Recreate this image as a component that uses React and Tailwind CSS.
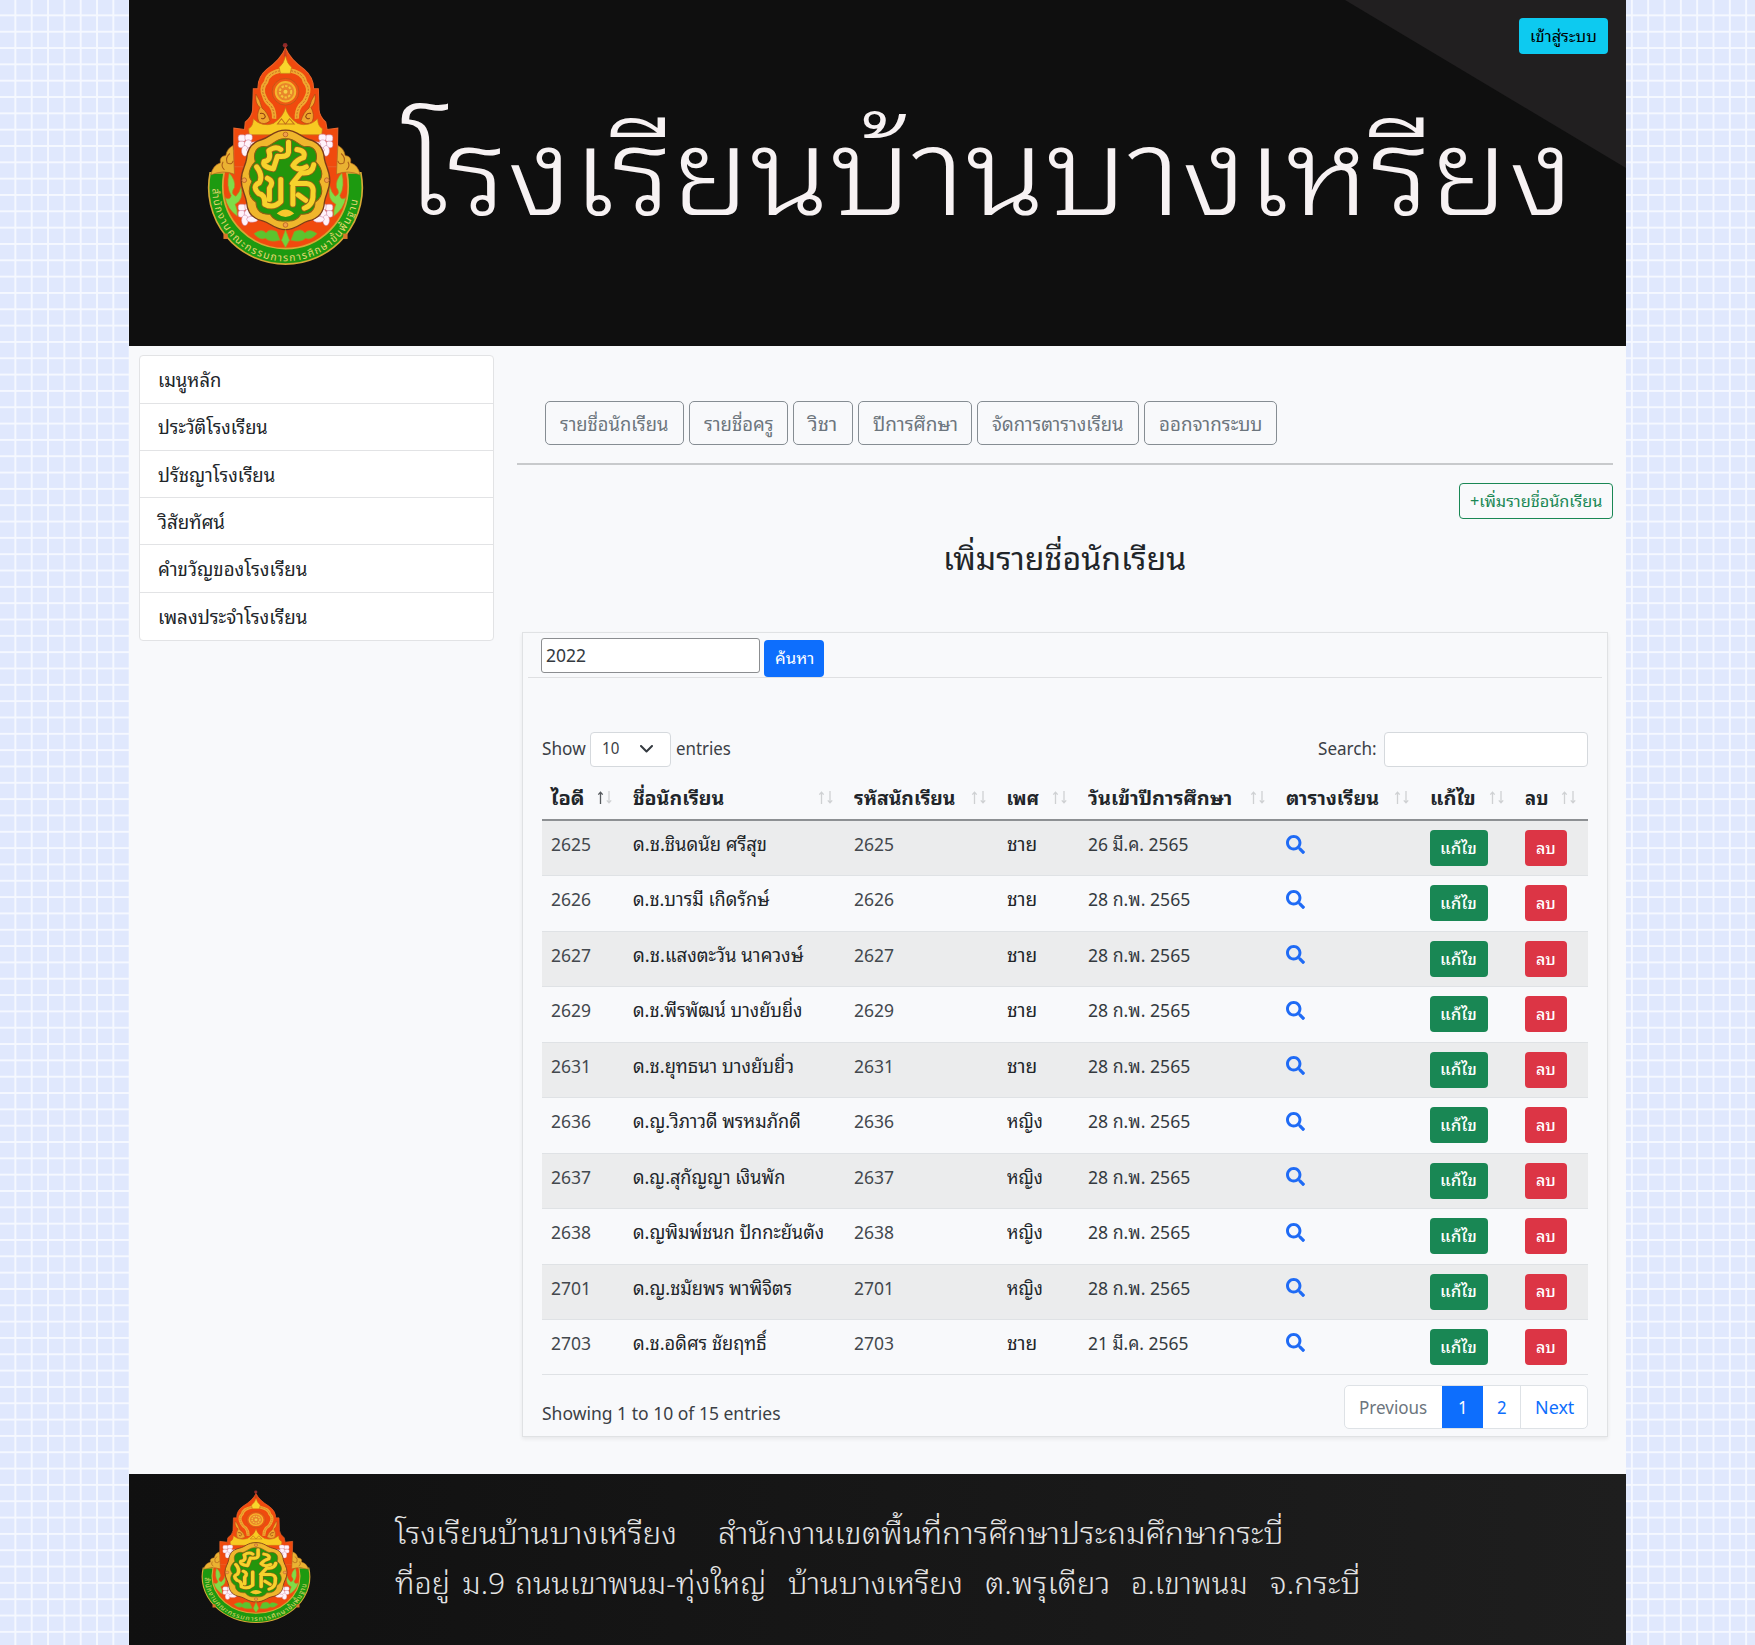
import { useLayoutEffect, useRef, useState } from "react";
import { FaSearch } from "react-icons/fa";

/* Text run condensed or widened to a given width. */
function Fit({ w, children, className = "" }) {
  const ref = useRef(null);
  const [k, setK] = useState(1);
  useLayoutEffect(() => {
    setK(w / ref.current.offsetWidth);
  }, [w, children]);
  return (
    <span className={"inline-block whitespace-pre text-left " + className} style={{ width: w }}>
      <span ref={ref} className="inline-block origin-left whitespace-pre" style={{ transform: `scaleX(${k})` }}>
        {children}
      </span>
    </span>
  );
}

function Lotus({ x, y, flip }) {
  return (
    <g transform={`translate(${x} ${y}) scale(${flip ? -1 : 1} 1)`} stroke="#c87a9c" strokeWidth="1.5" fill="#fff3fa">
      <rect x="-32" y="-34" width="22" height="20" rx="7" />
      <rect x="-12" y="-36" width="22" height="20" rx="7" />
      <rect x="-32" y="-15" width="20" height="20" rx="7" />
      <ellipse cx="-2" cy="-4" rx="12" ry="15" />
      <ellipse cx="18" cy="-4" rx="14" ry="9" />
      <ellipse cx="-12" cy="14" rx="10" ry="16" />
      <ellipse cx="10" cy="11" rx="17" ry="9" />
    </g>
  );
}

function Leaf({ flip }) {
  return (
    <g transform={flip ? "translate(632 0) scale(-1 1)" : undefined}>
      <path d="M148 458 Q168 480 164 502 Q150 520 168 528 Q180 515 184 498 Q192 540 166 552 Q174 568 172 588 Q142 566 136 532 Q150 542 154 526 Q138 500 148 458Z" fill="#7fdc48" stroke="#b5871d" strokeWidth="2" />
      <path d="M222 640 Q246 622 258 638 Q268 622 290 634 L300 660 Q270 668 256 654 Q240 662 222 640Z" fill="#5cc42e" stroke="#b5871d" strokeWidth="2" />
      <path d="M160 376 Q142 384 138 406 Q118 408 122 428 Q98 436 94 464 Q130 448 164 462Z" fill="#eab232" stroke="#b0641c" strokeWidth="2" />
      <path d="M150 400 q-14 12 -8 28 q14 8 18 -6 M130 425 q-8 14 4 24" fill="none" stroke="#a85a18" strokeWidth="3" />
      <path d="M228 222 Q224 250 240 262 Q228 284 236 304 Q252 318 270 302 Q262 276 246 264 Q240 240 228 222Z" fill="#efa52c" stroke="#a94712" strokeWidth="2" />
      <path d="M240 280 q12 -4 16 10 q-6 10 -12 4" fill="none" stroke="#8d3d10" strokeWidth="3" />
      <path d="M300 152 Q262 160 258 186 Q240 206 254 232 Q258 246 272 256 Q284 274 282 296" fill="none" stroke="#f0a830" strokeWidth="13" />
      <path d="M300 152 Q262 160 258 186 Q240 206 254 232 Q258 246 272 256 Q284 274 282 296" fill="none" stroke="#b0561a" strokeWidth="2" strokeDasharray="6 4" />
      <rect x="131" y="640" width="13" height="16" fill="#d9762a" />
    </g>
  );
}

function Emblem({ className, id }) {
  return (
    <svg className={className} viewBox="82 66 468 668" preserveAspectRatio="none" aria-hidden="true">
      <path d="M91.3 458 A229 229 0 1 0 540.7 458Z" fill="#1d9a10" stroke="#d6a935" strokeWidth="5" />
      <circle cx="316" cy="498" r="187" fill="#f04a0e" stroke="#d6a935" strokeWidth="5" />
      <path d="M316 84 Q330 118 372 148 Q400 172 400 206 L414 206 L416 270 Q418 290 436 306 L440 328 L472 324 L470 440 L162 440 L162 324 L194 328 L196 306 Q216 290 218 270 L220 206 L234 206 Q232 172 260 148 Q302 118 316 84Z" fill="#f04a0e" stroke="#e8632a" strokeWidth="3" />
      <circle cx="315" cy="76" r="7" fill="#8f2a2a" />
      <path d="M315 74 L320 110 H311Z" fill="#c9401e" />
      <Leaf />
      <Leaf flip />
      <path d="M316 108 Q320 130 334 142 L330 160 H301 L297 142 Q312 130 316 108Z" fill="#f9d52c" stroke="#c77a16" strokeWidth="2" />
      <circle cx="316" cy="215" r="40" fill="#ee5a14" stroke="#b4561a" strokeWidth="2" />
      <circle cx="316" cy="215" r="29" fill="#e9862a" stroke="#f5b62e" strokeWidth="6" />
      <circle cx="316" cy="215" r="17" fill="none" stroke="#f5c53a" strokeWidth="6" strokeDasharray="7 4" />
      <circle cx="316" cy="215" r="6" fill="#f6cf45" />
      <path d="M316 262 Q322 290 352 310 Q386 322 412 296 Q412 318 426 326 L424 344 H208 L206 326 Q220 318 220 296 Q246 322 280 310 Q310 290 316 262Z" fill="#f8ca22" stroke="#c4741a" strokeWidth="2" />
      <path d="M292 312 L304 296 L316 312 L328 296 L342 312Z" fill="none" stroke="#c4741a" strokeWidth="3" />
      <Lotus x={207} y={378} />
      <Lotus x={425} y={378} flip />
      <Lotus x={207} y={586} />
      <Lotus x={425} y={586} flip />
      <path d="M316 330 C352 330 362 352 386 358 C418 366 430 388 432 416 C436 440 448 452 448 480 C448 508 436 520 432 546 C430 576 412 596 384 602 C360 608 350 628 316 628 C282 628 272 608 248 602 C220 596 202 576 200 546 C196 520 184 508 184 480 C184 452 196 440 200 416 C202 388 214 366 246 358 C270 352 280 330 316 330Z" fill="#f0b62c" stroke="#7c3c18" strokeWidth="4" />
      <path d="M316 356 C340 352 352 372 372 380 C402 374 414 398 406 424 C426 446 430 466 416 484 C430 510 424 532 404 546 C404 572 386 584 362 582 C350 602 334 604 316 602 C298 604 282 602 270 582 C246 584 228 572 228 546 C208 532 202 510 216 484 C202 466 206 446 226 424 C218 398 230 374 260 380 C280 372 292 352 316 356Z" fill="#23950c" stroke="#8e5d14" strokeWidth="3" />
      <g fill="none" strokeLinecap="round" strokeLinejoin="round">
        <g stroke="#946214" strokeWidth="20">
          <path d="M325 366 V396 Q322 412 292 408 L280 446 Q246 440 252 424 Q276 420 266 392 Q286 376 302 388" />
          <path d="M350 388 Q378 392 370 412 Q350 418 338 436 Q352 454 378 440" />
          <path d="M230 440 Q250 466 238 488 Q214 498 236 520 Q256 524 254 552 Q280 566 302 544 V478 M262 474 Q284 484 268 504 V538" />
          <path d="M400 434 Q396 462 362 458 L336 490 H378 Q402 492 398 520 Q400 554 372 564 M338 500 V552 M354 524 L376 540" />
        </g>
        <g stroke="#f6d22c" strokeWidth="15">
          <path d="M325 366 V396 Q322 412 292 408 L280 446 Q246 440 252 424 Q276 420 266 392 Q286 376 302 388" />
          <path d="M350 388 Q378 392 370 412 Q350 418 338 436 Q352 454 378 440" />
          <path d="M230 440 Q250 466 238 488 Q214 498 236 520 Q256 524 254 552 Q280 566 302 544 V478 M262 474 Q284 484 268 504 V538" />
          <path d="M400 434 Q396 462 362 458 L336 490 H378 Q402 492 398 520 Q400 554 372 564 M338 500 V552 M354 524 L376 540" />
        </g>
      </g>
      <path d="M290 580 Q316 556 342 580 Q316 600 290 580Z" fill="#f6c82c" />
      <path d="M316 628 L328 660 L316 682 L304 660Z" fill="#6fd43c" stroke="#b5871d" strokeWidth="2" />
      {[[316, 343], [193, 480], [439, 480], [316, 614]].map(([x, y]) => (
        <circle key={x + "-" + y} cx={x} cy={y} r="7" fill="#f2a04a" stroke="#a8521e" strokeWidth="2" />
      ))}
      <path id={id} d="M98 505 A218 218 0 0 0 534 505" fill="none" />
      <text fill="#e6d873" fontSize="31" fontFamily="Noto Sans Thai, Noto Sans, sans-serif" textLength="650" lengthAdjust="spacing">
        <textPath href={"#" + id}>สำนักงานคณะกรรมการการศึกษาขั้นพื้นฐาน</textPath>
      </text>
    </svg>
  );
}

const MENU = [
  ["เมนูหลัก", 63],
  ["ประวัติโรงเรียน", 110],
  ["ปรัชญาโรงเรียน", 117.5],
  ["วิสัยทัศน์", 67],
  ["คำขวัญของโรงเรียน", 149.5],
  ["เพลงประจำโรงเรียน", 149],
];

const NAV = [
  ["รายชื่อนักเรียน", 108.5],
  ["รายชื่อครู", 69.5],
  ["วิชา", 29.5],
  ["ปีการศึกษา", 84.5],
  ["จัดการตารางเรียน", 132],
  ["ออกจากระบบ", 103],
];

const HEADS = [
  ["ไอดี", 34],
  ["ชื่อนักเรียน", 91.5],
  ["รหัสนักเรียน", 101],
  ["เพศ", 33],
  ["วันเข้าปีการศึกษา", 144],
  ["ตารางเรียน", 93],
  ["แก้ไข", 46],
  ["ลบ", 23],
];

const ROWS = [
  ["2625", "ด.ช.ชินดนัย ศรีสุข", 134, "ชาย", "26 มี.ค. 2565", 100.5],
  ["2626", "ด.ช.บารมี เกิดรักษ์", 136, "ชาย", "28 ก.พ. 2565", 102.5],
  ["2627", "ด.ช.แสงตะวัน นาควงษ์", 170, "ชาย", "28 ก.พ. 2565", 102.5],
  ["2629", "ด.ช.พีรพัฒน์ บางยับยิ่ง", 169, "ชาย", "28 ก.พ. 2565", 102.5],
  ["2631", "ด.ช.ยุทธนา บางยับยิ่ว", 161, "ชาย", "28 ก.พ. 2565", 102.5],
  ["2636", "ด.ญ.วิภาวดี พรหมภักดี", 168, "หญิง", "28 ก.พ. 2565", 102.5],
  ["2637", "ด.ญ.สุกัญญา เงินพัก", 152, "หญิง", "28 ก.พ. 2565", 102.5],
  ["2638", "ด.ญพิมพ์ชนก ปักกะยันตัง", 191, "หญิง", "28 ก.พ. 2565", 102.5],
  ["2701", "ด.ญ.ชมัยพร พาพิจิตร", 159, "หญิง", "28 ก.พ. 2565", 102.5],
  ["2703", "ด.ช.อดิศร ชัยฤทธิ์", 134, "ชาย", "21 มี.ค. 2565", 100.5],
];

const COLS = "grid grid-cols-[82px_220.5px_153px_81px_198.5px_143.5px_95.5px_72px]";

function SortArrows({ active }) {
  return (
    <svg className="h-[13px] w-[15px]" viewBox="0 0 15 13" fill="none" strokeWidth="1.3">
      <path d="M3.5 13V1.5M1.3 3.6L3.5 1.2L5.7 3.6" stroke={active ? "#55595d" : "#cfd1d3"} />
      <path d="M12 0V11.5M9.8 9.4L12 11.8L14.2 9.4" stroke="#cfd1d3" />
    </svg>
  );
}

export default function App() {
  return (
    <div className="flex h-[1645px] w-[1755px] overflow-hidden bg-[#e0e8fd] bg-[linear-gradient(to_right,transparent_14.8px,#f5f8ff_14.8px),linear-gradient(to_bottom,transparent_14.8px,#f5f8ff_14.8px)] bg-[length:16.34px_16.34px] pl-[129px] font-['Noto_Sans','Noto_Sans_Thai_Looped','Noto_Sans_Thai',sans-serif] text-[18.4px] leading-[27.6px] text-[#212529]">
      <div className="flex w-[1497px] flex-col bg-[#f8f9fb]">
        <header className="relative flex h-[346px] shrink-0 bg-[#0f0f0f]">
          <div className="absolute right-0 top-0 h-[168px] w-[281px] bg-[#211f20] [clip-path:polygon(0_0,100%_0,100%_100%)]" />
          <Emblem id="ring-top" className="ml-[78px] mt-[42px] h-[223px] w-[157px] shrink-0" />
          <h1 className="ml-[38px] mt-[68px] h-[200px] text-[121px] font-light leading-[200px] text-[#f7f2f3]">
            <Fit w={1172}>โรงเรียนบ้านบางเหรียง</Fit>
          </h1>
          <button className="absolute right-[18px] top-[18px] flex h-[36px] w-[89px] items-center justify-center rounded-[4px] bg-[#0dcaf0] pt-[2px] text-[16px] text-black">
            <Fit w={67}>เข้าสู่ระบบ</Fit>
          </button>
        </header>

        <main className="flex h-[1128px] shrink-0">
          <ul className="ml-[10px] mt-[9px] h-[286px] w-[355px] rounded-[4px] border border-[#e2e3e5] bg-white">
            {MENU.map(([t, w], i) => (
              <li key={t} className={"flex items-center pl-[18px] pt-px " + (i ? "h-[47.3px] border-t border-[#e2e3e5]" : "h-[46.5px]")}>
                <Fit w={w}>{t}</Fit>
              </li>
            ))}
          </ul>

          <section className="ml-[23px] flex w-[1096px] flex-col">
            <nav className="ml-[28px] mt-[55px] flex h-[44px] gap-[5px]">
              {NAV.map(([t, w]) => (
                <button key={t} className="flex items-center rounded-[5px] border border-[#868d93] px-[14px] pt-[1px] text-[#6c757d]">
                  <Fit w={w}>{t}</Fit>
                </button>
              ))}
            </nav>
            <hr className="mt-[18px] h-[2px] border-0 bg-[#c8cacc]" />
            <button className="mt-[18px] flex h-[36px] w-[154px] items-center justify-center self-end rounded-[4px] border border-[#198754] pt-[2px] text-[16px] text-[#198754]">
              <Fit w={132}>+เพิ่มรายชื่อนักเรียน</Fit>
            </button>
            <h2 className="mt-[19px] flex h-[40px] items-center justify-center pr-[2px] text-[32px] leading-[40px]">
              <Fit w={243}>เพิ่มรายชื่อนักเรียน</Fit>
            </h2>

            <div className="ml-[5px] mt-[54px] flex h-[805px] w-[1086px] flex-col border border-[#e0e2e4] px-[19px] shadow-[0_2px_4px_rgba(0,0,0,0.07)]">
              <div className="-mx-[14px] flex h-[44.5px] gap-[4px] border-b border-[#dfe0e2] pl-[13px] pt-[5px]">
                <div className="flex h-[35px] w-[219px] items-center rounded-[3px] border border-[#8b8d90] bg-white pb-[1px] pl-[4px] text-[#343a40]">
                  <Fit w={40}>2022</Fit>
                </div>
                <button className="mt-[2px] flex h-[36.5px] w-[60px] items-center justify-center rounded-[4px] bg-[#0d6efd] pt-px text-[16px] text-white">
                  <Fit w={39}>ค้นหา</Fit>
                </button>
              </div>

              <div className="mt-[54px] flex h-[35px] items-center text-[#3b4045]">
                <Fit w={44} className="-mt-[2px]">Show</Fit>
                <div className="ml-[4px] mr-[5px] flex h-[35px] w-[81px] items-center justify-between rounded-[4px] border border-[#d5d9dd] bg-white pl-[11px] pr-[17px] text-[16px]">
                  <Fit w={17}>10</Fit>
                  <svg className="h-[8px] w-[13px]" viewBox="0 0 13 8" fill="none">
                    <path d="M1 1L6.5 6.5L12 1" stroke="#343a40" strokeWidth="2" strokeLinecap="round" strokeLinejoin="round" />
                  </svg>
                </div>
                <Fit w={55} className="-mt-[2px]">entries</Fit>
                <Fit w={58.5} className="-mt-[2px] ml-auto">Search:</Fit>
                <div className="ml-[8px] h-[35px] w-[204px] rounded-[4px] border border-[#d5d9dd] bg-white" />
              </div>

              <div className={COLS + " mt-[8px] h-[46.5px] border-b-2 border-[#8d9093] font-bold"}>
                {HEADS.map(([t, w], i) => (
                  <div key={t} className="flex items-center justify-between pl-[9px] pr-[12px] pt-[2px]">
                    <Fit w={w}>{t}</Fit>
                    <SortArrows active={i === 0} />
                  </div>
                ))}
              </div>
              {ROWS.map(([id, name, nw, sex, date, dw], i) => (
                <div key={id} className={COLS + " h-[55.45px] shrink-0 items-start border-b border-[#dfe2e5] pt-[9px] *:pl-[9px] " + (i % 2 ? "" : "bg-[#ebeced]")}>
                  <div className="text-[#43484d]"><Fit w={40}>{id}</Fit></div>
                  <div><Fit w={nw}>{name}</Fit></div>
                  <div className="text-[#43484d]"><Fit w={40}>{id}</Fit></div>
                  <div><Fit w={sex === "ชาย" ? 30 : 36}>{sex}</Fit></div>
                  <div className="text-[#343a3f]"><Fit w={dw}>{date}</Fit></div>
                  <div className="pt-[4.5px]"><FaSearch className="size-[19px] text-[#1f6bf5]" /></div>
                  <div>
                    <button className="flex h-[36px] w-[58px] items-center justify-center rounded-[4px] bg-[#198754] pt-px text-[16px] font-medium text-white">
                      <Fit w={37}>แก้ไข</Fit>
                    </button>
                  </div>
                  <div>
                    <button className="flex h-[36px] w-[42px] items-center justify-center rounded-[4px] bg-[#dc3545] pt-px text-[16px] font-medium text-white">
                      <Fit w={20}>ลบ</Fit>
                    </button>
                  </div>
                </div>
              ))}

              <div className="mt-[9.5px] flex h-[44px] shrink-0 justify-between">
                <div className="pt-[14px] text-[#3b4045]"><Fit w={239}>Showing 1 to 10 of 15 entries</Fit></div>
                <div className="flex overflow-hidden rounded-[5px] border border-[#dee2e6] bg-white text-[#0d6efd] *:flex *:items-center *:justify-center">
                  <div className="w-[97px] text-[#6c757d]"><Fit w={68.5}>Previous</Fit></div>
                  <div className="-my-px w-[41px] bg-[#0d6efd] text-white"><Fit w={10}>1</Fit></div>
                  <div className="w-[37px]"><Fit w={10}>2</Fit></div>
                  <div className="w-[67px] border-l border-[#dee2e6]"><Fit w={39}>Next</Fit></div>
                </div>
              </div>
            </div>
          </section>
        </main>

        <footer className="flex h-[171px] shrink-0 bg-linear-to-r from-[#101010] to-[#1e1e1e]">
          <Emblem id="ring-bottom" className="ml-[72px] mt-[16px] h-[133px] w-[110px] shrink-0" />
          <div className="ml-[84px] mt-[34px] text-[30px] font-light leading-[50px] text-[#e4e4e4]">
            <div className="flex h-[50px] gap-[41px]">
              <Fit w={282}>โรงเรียนบ้านบางเหรียง</Fit>
              <Fit w={566}>สำนักงานเขตพื้นที่การศึกษาประถมศึกษากระบี่</Fit>
            </div>
            <div className="flex h-[50px]">
              <Fit w={55}>ที่อยู่</Fit>
              <Fit w={43} className="ml-[12px]">ม.9</Fit>
              <Fit w={251} className="ml-[10px]">ถนนเขาพนม-ทุ่งใหญ่</Fit>
              <Fit w={175} className="ml-[22px]">บ้านบางเหรียง</Fit>
              <Fit w={125} className="ml-[22px]">ต.พรุเตียว</Fit>
              <Fit w={117} className="ml-[21px]">อ.เขาพนม</Fit>
              <Fit w={91} className="ml-[22px]">จ.กระบี่</Fit>
            </div>
          </div>
        </footer>
      </div>
    </div>
  );
}
